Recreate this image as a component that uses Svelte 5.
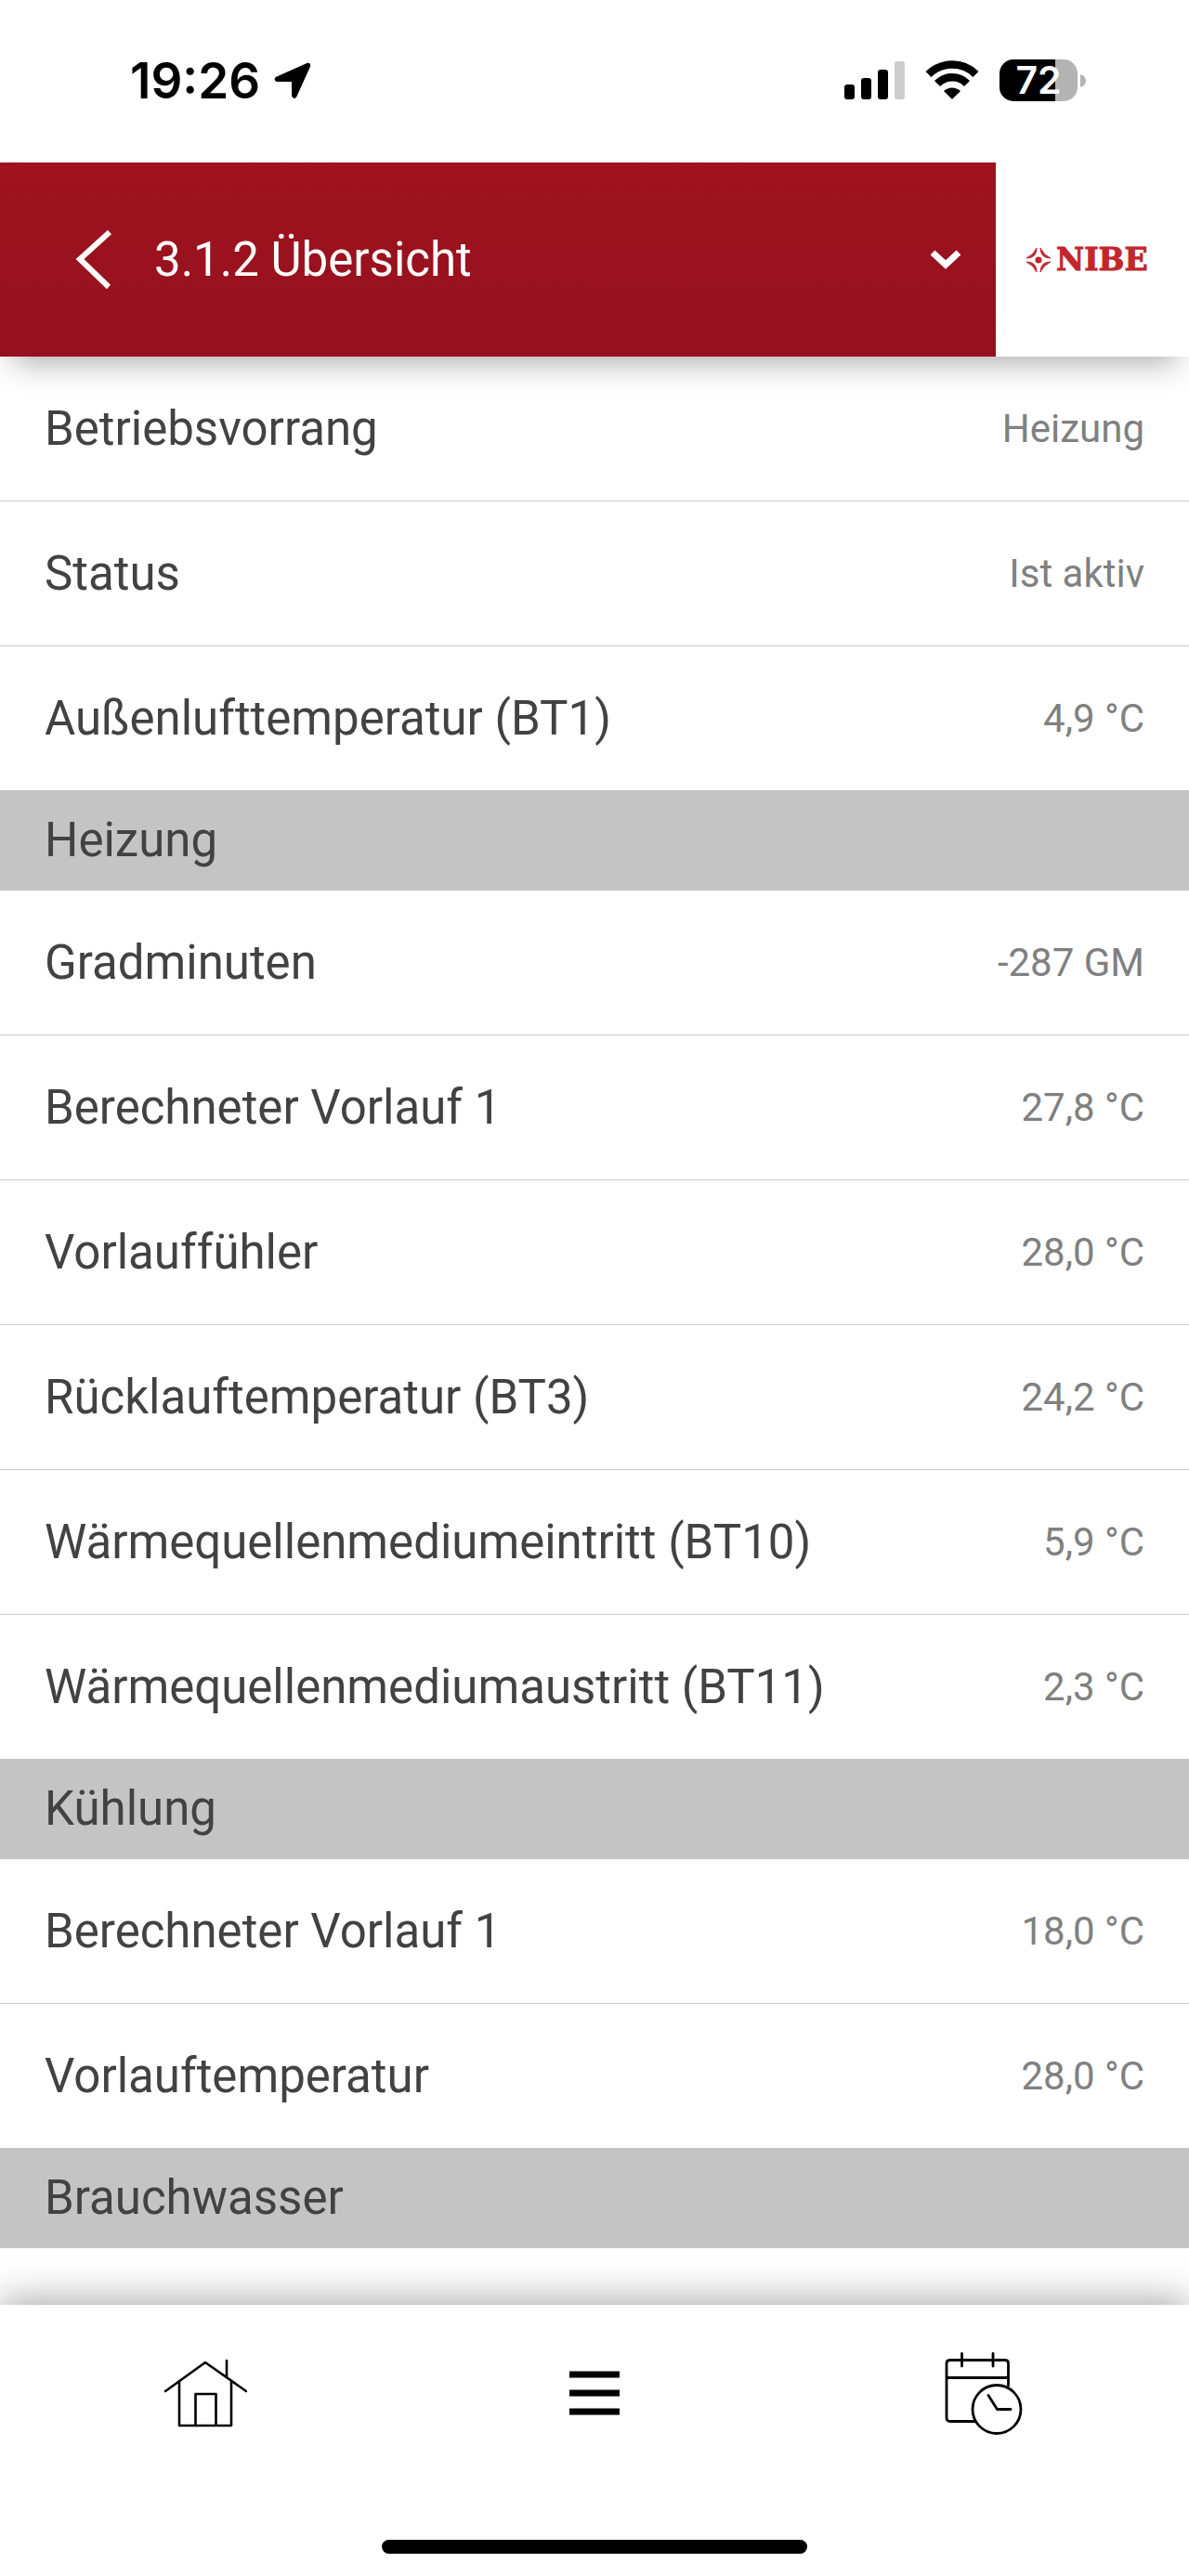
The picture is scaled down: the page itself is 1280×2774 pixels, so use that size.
<script>
  const groups = [
    {
      title: '',
      rows: [
        ['Betriebsvorrang', 'Heizung'],
        ['Status', 'Ist aktiv'],
        ['Außenlufttemperatur (BT1)', '4,9 °C']
      ]
    },
    {
      title: 'Heizung',
      rows: [
        ['Gradminuten', '-287 GM'],
        ['Berechneter Vorlauf 1', '27,8 °C'],
        ['Vorlauffühler', '28,0 °C'],
        ['Rücklauftemperatur (BT3)', '24,2 °C'],
        ['Wärmequellenmediumeintritt (BT10)', '5,9 °C'],
        ['Wärmequellenmediumaustritt (BT11)', '2,3 °C']
      ]
    },
    {
      title: 'Kühlung',
      rows: [
        ['Berechneter Vorlauf 1', '18,0 °C'],
        ['Vorlauftemperatur', '28,0 °C']
      ]
    },
    { title: 'Brauchwasser', rows: [] }
  ];
</script>

<div class="app">
  <div class="status">
    <div class="clock">
      <span>19:26</span>
      <svg width="42" height="42" viewBox="0 0 42 42" aria-hidden="true">
        <path d="M4 18 L36.500 3.500 Q39.500 2.500 38.500 5.500 L24 37.500 Q22.500 39.500 21.500 37 L21.500 20.500 L4.500 20.500 Q2 19.500 4 18Z" stroke="#000" stroke-width="3" stroke-linejoin="round" />
      </svg>
    </div>
    <div class="indicators">
      <svg width="65" height="46" viewBox="0 0 65 46" aria-hidden="true">
        <rect x="0" y="27" width="11" height="16" rx="3" />
        <rect x="18" y="20" width="11" height="23" rx="3" />
        <rect x="36" y="11" width="11" height="32" rx="3" />
        <rect x="54" y="2" width="11" height="41" rx="3" fill="#ccc" />
      </svg>
      <svg width="58" height="46" viewBox="0 0 58 46" aria-hidden="true">
        <path d="M3.500 16 A36.500 36.500 0 0 1 54.500 16" fill="none" stroke="#000" stroke-width="8.500" />
        <path d="M13 26 A22.500 22.500 0 0 1 45 26" fill="none" stroke="#000" stroke-width="8.500" />
        <path d="M20 34 A13 13 0 0 1 38 34 L29.700 42.300 Q29 43 28.300 42.300Z" />
      </svg>
      <div class="battery">
        <div class="level"><span>72</span></div>
        <svg width="6" height="14" viewBox="0 0 6 14" aria-hidden="true">
          <path d="M0 0 Q6 2 6 7 T0 14Z" fill="#b3b3b3" />
        </svg>
      </div>
    </div>
  </div>

  <header>
    <div class="bar">
      <button class="back" aria-label="Zurück">
        <svg width="40" height="66" viewBox="0 0 40 66" fill="none" stroke="#fff" stroke-width="6" aria-hidden="true">
          <path d="M37 3 L5 32 L36 62" />
        </svg>
      </button>
      <button class="title">
        <span>3.1.2 Übersicht</span>
        <svg width="34" height="24" viewBox="0 0 34 24" fill="none" stroke="#fff" stroke-width="7" aria-hidden="true">
          <path d="M3 4 L17 17 L31 4" />
        </svg>
      </button>
    </div>
    <a class="logo" href="#home" aria-label="NIBE">
      <svg width="28" height="28" viewBox="0 0 28 28" fill="#c1272d" aria-hidden="true">
        <circle cx="14" cy="14" r="3.600" />
        <path d="M12 1 Q12 12 1 12 Q8.500 8.500 12 1Z M16 1 Q16 12 27 12 Q19.500 8.500 16 1Z M12 27 Q12 16 1 16 Q8.500 19.500 12 27Z M16 27 Q16 16 27 16 Q19.500 19.500 16 27Z" stroke="#c1272d" stroke-width="1" />
      </svg>
      <span>NIBE</span>
    </a>
  </header>

  <main>
    {#each groups as group}
      <section>
        {#if group.title}<h2>{group.title}</h2>{/if}
        {#if group.rows.length}
          <dl>
            {#each group.rows as [label, value]}
              <div class="row">
                <dt>{label}</dt>
                <dd>{value}</dd>
              </div>
            {/each}
          </dl>
        {/if}
      </section>
    {/each}
  </main>

  <footer>
    <nav>
      <a href="#start" aria-label="Startseite">
        <svg width="90" height="90" viewBox="0 0 90 90" fill="none" stroke="#000" stroke-width="2.600" stroke-linecap="round" stroke-linejoin="round" aria-hidden="true">
          <path d="M2 43 L45 12 L89 43 M17 33 V80 H73 V33 M68 27 V10 M34.500 80 V46 H56.500 V80" />
        </svg>
      </a>
      <a href="#menu" aria-label="Menü">
        <svg width="54" height="90" viewBox="0 0 54 90" aria-hidden="true">
          <path d="M0 21.500h54v7H0z M0 41.500h54v7H0z M0 61.500h54v7H0z" />
        </svg>
      </a>
      <a href="#schedule" aria-label="Zeitplan">
        <svg width="84" height="90" viewBox="0 0 84 90" fill="none" stroke="#000" stroke-width="2.800" stroke-linecap="round" stroke-linejoin="round" aria-hidden="true">
          <path d="M32 75.500 H6 Q2 75.500 2 71.500 V13 Q2 9.500 6 9.500 H65 Q68.500 9.500 68.500 13 V37 M2 28.500 H68.500 M18.500 2.500 V16 M52 2.500 V16" />
          <circle cx="56" cy="62.500" r="26" />
          <path d="M47 47.500 L56.500 62.500 H71" />
        </svg>
      </a>
    </nav>
    <div class="home-indicator"></div>
  </footer>
</div>

<style>
  :global(body) {
    margin: 0;
    background: #fff;
  }

  .app {
    display: flex;
    flex-direction: column;
    min-height: 100vh;
    background: #fff;
    color: #424242;
    font-family: Roboto, "Liberation Sans", sans-serif;
  }

  button {
    padding: 0;
    border: 0;
    background: none;
    color: inherit;
    font: inherit;
    cursor: pointer;
  }

  a {
    text-decoration: none;
  }

  svg {
    display: block;
    flex: none;
  }

  .status {
    display: flex;
    justify-content: space-between;
    align-items: center;
    box-sizing: border-box;
    height: 175px;
    padding: 0 111px 2px 140px;
    color: #000;
    font-family: Inter, "Liberation Sans", sans-serif;
    font-weight: 600;
  }

  .clock {
    display: flex;
    align-items: center;
    gap: 14px;
    font-size: 53px;
    line-height: 64px;
  }

  .indicators {
    display: flex;
    align-items: center;
    gap: 22px;
  }

  .battery {
    display: flex;
    align-items: center;
    gap: 3px;
  }

  .level {
    width: 84px;
    border-radius: 15px;
    background: linear-gradient(90deg, #000 60px, #b3b3b3 60px);
    color: #fff;
    font-size: 41px;
    line-height: 45px;
    text-align: center;
  }

  header {
    position: relative;
    display: flex;
    height: 209px;
    background: #fff;
    box-shadow: 0 20px 32px -14px rgba(0, 0, 0, 0.34);
  }

  .bar {
    display: flex;
    flex: 1;
    align-items: center;
    padding: 0 37px 0 81px;
    background: linear-gradient(#a01320, #94111d);
    color: #fff;
  }

  .title {
    display: flex;
    flex: 1;
    align-items: center;
    justify-content: space-between;
    padding-left: 45px;
    font-size: 51px;
    line-height: 64px;
    text-align: left;
  }

  .logo {
    display: flex;
    align-items: center;
    gap: 5px;
    box-sizing: border-box;
    width: 208px;
    padding-left: 32px;
    color: #c1272d;
    font-family: "DejaVu Serif", "Liberation Serif", serif;
    font-size: 33px;
    font-weight: 700;
    line-height: 40px;
    -webkit-text-stroke: 1px #c1272d;
  }

  main {
    flex: 1;
  }

  h2 {
    margin: 0;
    padding: 22px 48px;
    background: #c4c4c4;
    font-size: 51px;
    font-weight: 400;
    line-height: 64px;
  }

  dl {
    margin: 0;
  }

  .row {
    display: flex;
    align-items: center;
    justify-content: space-between;
    min-height: 155px;
    padding: 0 48px;
  }

  .row + .row {
    border-top: 1px solid #cbcbcb;
  }

  dt {
    font-size: 51px;
    line-height: 64px;
  }

  dd {
    margin: 0;
    color: #808080;
    font-size: 42px;
    line-height: 64px;
  }

  footer {
    position: relative;
    padding: 50px 12px 24px;
    background: #fff;
    box-shadow: 0 -4px 40px rgba(0, 0, 0, 0.36);
  }

  nav {
    display: grid;
    grid-template-columns: repeat(3, 1fr);
    justify-items: center;
  }

  .home-indicator {
    width: 458px;
    height: 15px;
    margin: 113px auto 0;
    border-radius: 8px;
    background: #000;
  }
</style>
